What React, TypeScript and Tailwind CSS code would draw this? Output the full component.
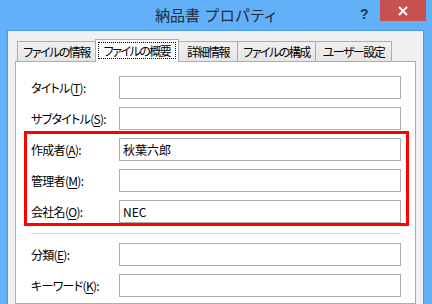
import React from 'react';

const font = "font-['Noto_Sans_CJK_JP',sans-serif] [font-feature-settings:'palt']";

function Tab({ label, w, selected, first }: { label: string; w: string; selected?: boolean; first?: boolean }) {
    if (selected) {
        return (
            <div className={`${w} -ml-px relative z-20 h-[23px] bg-white border border-b-0 border-[#acacac] flex flex-col items-stretch`}>
                <div className="mx-[2px] mt-[2px] h-[17px] border border-dotted border-black flex items-center justify-center text-[12px] leading-none tracking-[-1.5px] whitespace-nowrap text-black">
                    {label}
                </div>
            </div>
        );
    }
    return (
        <div
            className={`${w} ${first ? '' : '-ml-px'} shrink-0 h-[20px] mb-px border border-b-0 border-[#acacac] bg-gradient-to-b from-[#f0f0f0] to-[#e5e5e5] flex items-center justify-center text-[12px] leading-none tracking-[-1.5px] whitespace-nowrap text-black`}
        >
            {label}
        </div>
    );
}

function Row({ label, k, value }: { label: string; k: string; value?: string }) {
    return (
        <div className="flex items-center h-[23px]">
            <div className="w-[88px] text-[12px] leading-none tracking-[-0.7px] text-black whitespace-nowrap">
                {label}(<span className="underline underline-offset-2">{k}</span>):
            </div>
            <div className="w-[282px] h-[23px] border border-[#abadb3] bg-white flex items-center pl-[3px] text-[12px] leading-none text-black">
                {value}
            </div>
        </div>
    );
}

export default function App() {
    return (
        <div className={`w-[432px] h-[304px] overflow-hidden bg-[#62b0f7] flex flex-col ${font}`}>
            {/* Title bar */}
            <div className="h-[30px] flex shrink-0">
                <div className="w-[72px]" />
                <div className="flex-1 flex items-center justify-center pt-[1px] text-[15px] text-[#1f2c38] whitespace-nowrap">
                    納品書<span className="ml-[5px] tracking-[1px]">プロパティ</span>
                </div>
                <div className="w-[72px] flex">
                    <div className="w-[16px] flex justify-start pt-[4px] text-[14px] font-bold text-[#2a3540] font-['Liberation_Sans',sans-serif]">
                        ?
                    </div>
                    <div className="ml-[4px] w-[46px] h-[21px] bg-[#c75050] flex items-center justify-center">
                        <svg width="10" height="10" viewBox="0 0 10 10">
                            <path d="M1 1 L9 9 M9 1 L1 9" stroke="white" strokeWidth="2" />
                        </svg>
                    </div>
                </div>
            </div>

            {/* Body */}
            <div className="flex-1 ml-[7px] mr-[8px] bg-[#f0f0f0] border-x border-t border-[#4c98de] pt-[8px] pl-[7px] pr-[7px] flex flex-col">
                <div className="flex items-end ml-[2px] h-[23px] relative z-10">
                    <Tab label="ファイルの情報" w="w-[79px]" first />
                    <Tab label="ファイルの概要" w="w-[84px]" selected />
                    <Tab label="詳細情報" w="w-[60px]" />
                    <Tab label="ファイルの構成" w="w-[79px]" />
                    <Tab label="ユーザー設定" w="w-[77px]" />
                </div>
                <div className="-mt-px flex-1 bg-white border border-[#acacac] pt-[14px] pl-[15px] flex flex-col">
                    <div className="flex flex-col gap-[8px]">
                        <Row label="タイトル" k="T" />
                        <Row label="サブタイトル" k="S" />
                    </div>
                    <div className="mt-px -ml-[7px] w-[385px] border-[3px] border-[#ff0000] pt-[4px] pl-[4px] flex flex-col gap-[8px]">
                        <Row label="作成者" k="A" value="秋葉六郎" />
                        <Row label="管理者" k="M" />
                        <Row label="会社名" k="O" value="NEC" />
                    </div>
                    <div className="mt-[7px] w-[370px] h-px bg-[#dcdcdc]" />
                    <div className="mt-[9px] flex flex-col gap-[8px]">
                        <Row label="分類" k="E" />
                        <Row label="キーワード" k="K" />
                    </div>
                </div>
            </div>
        </div>
    );
}
